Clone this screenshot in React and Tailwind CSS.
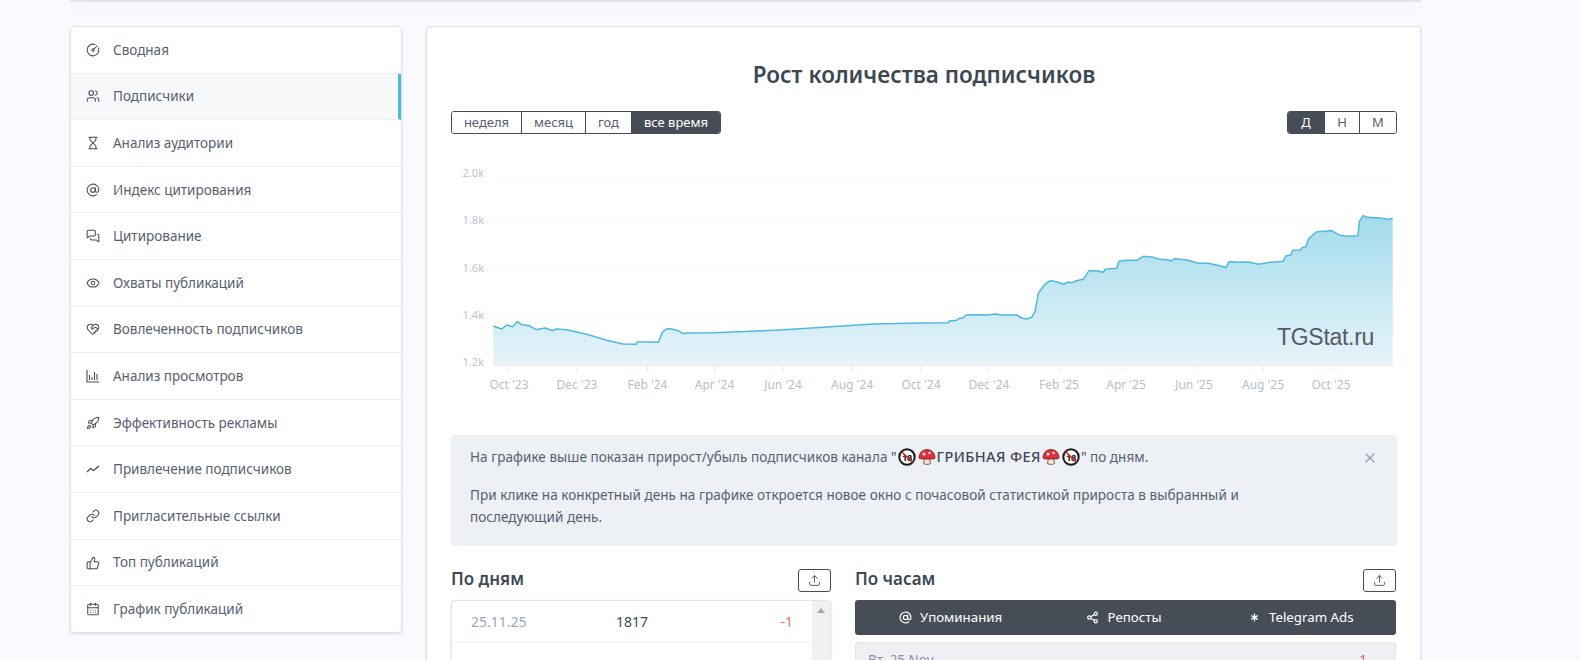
import {
  AtSign,
  CalendarDays,
  CircleGauge,
  Eye,
  HeartHandshake,
  Hourglass,
  Link,
  MessagesSquare,
  Rocket,
  Share2,
  ThumbsUp,
  Upload,
  Users,
  X,
  Asterisk,
} from "lucide-react"

function BarsIcon({ className }) {
  return (
    <svg width="14" height="14" viewBox="0 0 14 14" fill="none" stroke="currentColor" strokeWidth="1.1" className={className}>
      <path d="M1 1v12h12" />
      <path d="M3.500 11V6M6 11V8M8.500 11V3M11 11V5" />
    </svg>
  )
}

function WaveIcon({ className }) {
  return (
    <svg width="14" height="14" viewBox="0 0 14 14" fill="none" stroke="currentColor" strokeWidth="1.3" strokeLinejoin="round" className={className}>
      <path d="M1 10l3.500-3.500L7.500 8.500 13 4" />
    </svg>
  )
}

const menu = [
  { label: "Сводная", icon: CircleGauge },
  { label: "Подписчики", icon: Users, active: true },
  { label: "Анализ аудитории", icon: Hourglass },
  { label: "Индекс цитирования", icon: AtSign },
  { label: "Цитирование", icon: MessagesSquare },
  { label: "Охваты публикаций", icon: Eye },
  { label: "Вовлеченность подписчиков", icon: HeartHandshake },
  { label: "Анализ просмотров", icon: BarsIcon },
  { label: "Эффективность рекламы", icon: Rocket },
  { label: "Привлечение подписчиков", icon: WaveIcon },
  { label: "Пригласительные ссылки", icon: Link },
  { label: "Топ публикаций", icon: ThumbsUp },
  { label: "График публикаций", icon: CalendarDays },
]

// traced from the chart, in page pixels
const line = [
  [493.3, 326], [496.7, 327.3], [501.7, 329], [506.7, 325], [512.7, 326.7], [517.3, 321.7], [521.7, 324.7], [529.3, 325.7],
  [536, 329.7], [545, 328], [552.7, 330.7], [556, 329], [566.7, 329.7], [586.7, 334.3], [606.7, 340.3], [623.3, 344],
  [636, 344.3], [637.3, 342], [646.7, 342], [658.3, 342.3], [662.7, 331.7], [667.3, 328.7], [671.7, 329], [678.3, 330.7],
  [682.7, 333.7], [686.7, 333], [713.3, 332.7], [780, 330], [823.3, 327.3], [873.3, 324], [920, 323],
  [948.3, 322.7], [949.3, 321], [956.7, 320.3], [958.3, 318.7], [963.3, 317.7], [966, 315], [976.7, 314.7], [988.3, 315],
  [995, 314], [1001.7, 315], [1016.7, 315], [1021.7, 318], [1026.7, 319], [1031.7, 317.3], [1035, 311.7], [1038.3, 293.3],
  [1045, 284.3], [1050, 280.7], [1056.7, 281.7], [1063.3, 284.3], [1068.3, 282], [1071.7, 282.7], [1076.7, 280.7], [1083.3, 279.3],
  [1089, 270.7], [1096.7, 270.7], [1103.3, 272.3], [1105, 269.3], [1116.7, 268.3], [1119, 261.3], [1126.7, 260.3], [1136.7, 260.3],
  [1143.3, 256.3], [1153.3, 257.3], [1158.3, 259], [1168.3, 260], [1170.7, 261], [1175, 258.7], [1186.7, 260], [1198.3, 263.3],
  [1208.3, 263.3], [1220, 265.7], [1226, 267.7], [1229, 261.7], [1240, 262.3], [1248.3, 262], [1258.3, 264.3], [1270, 262.3],
  [1283.3, 261.3], [1285.7, 256], [1290.7, 255], [1292.7, 250.3], [1300, 250], [1302.7, 247.3], [1306, 246.7], [1308.3, 239],
  [1316.7, 231.7], [1331.7, 230.7], [1340, 235.3], [1346.7, 236.3], [1358, 235.7], [1359.3, 221.7], [1363.3, 215.3], [1366.7, 217.3],
  [1380, 218], [1388.3, 219.3], [1392.7, 218.7],
]
const linePath = line.map(([x, y]) => `${x},${y}`).join(" ")

const yLabels = [["2.0k", 176, 173], ["1.8k", 223, 220], ["1.6k", 270, 268], ["1.4k", 317, 315], ["1.2k", null, 362]]
const xLabels = [
  ["Oct '23", 509], ["Dec '23", 577], ["Feb '24", 647.5], ["Apr '24", 714.5], ["Jun '24", 783], ["Aug '24", 852], ["Oct '24", 921],
  ["Dec '24", 989], ["Feb '25", 1059], ["Apr '25", 1126], ["Jun '25", 1194], ["Aug '25", 1263], ["Oct '25", 1331],
]

function GrowthChart() {
  return (
    <svg width="946" height="301" viewBox="451 134 946 301" className="block">
      <defs>
        <linearGradient id="area" x1="0" y1="0" x2="0" y2="1">
          <stop offset="0" stopColor="#a3dbeb" />
          <stop offset="1" stopColor="#e6f4fa" />
        </linearGradient>
      </defs>
      {yLabels.map(([label, gridY, textY]) => (
        <g key={label}>
          {gridY && <line x1="493" x2="1393" y1={gridY} y2={gridY} stroke="#f7f8fa" />}
          <text x="484" y={textY + 4} textAnchor="end" fontSize="11" fill="#b9c3d1">{label}</text>
        </g>
      ))}
      <polygon points={`493.3,364 ${linePath} 1392.7,364`} fill="url(#area)" />
      <polyline points={linePath} fill="none" stroke="#4fb9dc" strokeWidth="1.5" strokeLinejoin="round" />
      <line x1="493" x2="1393" y1="365" y2="365" stroke="#e6e8ec" strokeWidth="1.5" />
      {xLabels.map(([label, x]) => (
        <g key={label}>
          <line x1={x} x2={x} y1="365" y2="371" stroke="#e6e8ec" />
          <text x={x} y="389" textAnchor="middle" fontSize="12" fill="#b5bfcd">{label}</text>
        </g>
      ))}
      <text x="1277" y="345" fontSize="23" letterSpacing="-0.3" fill="#555b61" style={{ fontFamily: "Liberation Sans, sans-serif" }}>TGStat.ru</text>
    </svg>
  )
}

function NoUnder18() {
  return (
    <svg width="18" height="18" viewBox="0 0 18 18" className="mx-[1px] inline-block align-[-4px]">
      <circle cx="9" cy="9" r="7.700" fill="#fff" stroke="#1b1b1b" strokeWidth="2" />
      <text x="9" y="12.500" textAnchor="middle" fontSize="9.500" fontWeight="700" letterSpacing="-0.5" fill="#1b1b1b">18</text>
      <path d="M3.500 3.500l11 11" stroke="#d8232a" strokeWidth="1.500" />
    </svg>
  )
}

function Mushroom() {
  return (
    <svg width="18" height="18" viewBox="0 0 18 18" className="mx-[1px] inline-block align-[-4px]">
      <path d="M6.500 10h5l1 5.500c-1.500 1.200-5.500 1.200-7 0z" fill="#f6e6d2" stroke="#5b4632" strokeWidth=".8" />
      <path d="M1 10C1 5 4.500 1.500 9 1.500s8 3.500 8 8.500c0 1-3 1-8 1s-8 0-8-1z" fill="#d9343a" stroke="#6e1a1e" strokeWidth=".8" />
      <circle cx="6" cy="6" r="1.500" fill="#fbe7e2" />
      <circle cx="11.500" cy="5" r="1.200" fill="#fbe7e2" />
    </svg>
  )
}

function ButtonGroup({ items, active, itemClass }) {
  return (
    <div className="flex h-[23px] overflow-hidden rounded-[3px] border border-[#474d57] text-[13px] leading-[21px] text-[#566170]">
      {items.map((item, i) => (
        <span
          key={item}
          className={`${itemClass[i]} text-center ${i > 0 ? "border-l border-[#474d57]" : ""} ${item === active ? "bg-[#474d57] text-white" : "bg-white"}`}
        >
          {item}
        </span>
      ))}
    </div>
  )
}

function ExportButton() {
  return (
    <span className="flex h-[23px] w-[33px] items-center justify-center rounded-[3px] border border-[#474d57] text-[#474d57]">
      <Upload size={13} strokeWidth={1.6} />
    </span>
  )
}

function App() {
  return (
    <div className="h-[660px] w-[1580px] overflow-hidden bg-[#f9fafd] font-['Noto_Sans',sans-serif] text-[13.5px] text-[#566170]">
      <div className="ml-[70px] h-[2px] w-[1351px] border-b-2 border-[#e1e4ea] bg-white shadow-[0_2px_20px_rgba(80,90,120,0.1)]" />
      <div className="ml-[70px] mt-[24px] flex w-[1351px] items-start gap-[24px]">
        <nav className="flex h-[607px] w-[332px] shrink-0 flex-col divide-y divide-[#eef0f5] overflow-hidden rounded-[4px] border border-[#dfe3ea] bg-white shadow-sm">
          {menu.map(({ label, icon: Icon, active }) => (
            <a
              key={label}
              className={`flex flex-1 items-center gap-[13px] pl-[15px] ${active ? "border-r-[3px] border-r-[#45bcd8] bg-[#f7f8fa]" : ""}`}
            >
              <Icon size={14} strokeWidth={1.8} className="shrink-0 text-[#474d57]" />
              <span>{label}</span>
            </a>
          ))}
        </nav>

        <main className="w-[995px] rounded-[4px] border border-[#dfe3ea] bg-white pl-[24px] pr-[23px] pt-[33px] shadow-sm">
          <h1 className="text-center text-[22.5px] font-semibold leading-[30px] text-[#3e4855]">Рост количества подписчиков</h1>

          <div className="mt-[21px] flex justify-between">
            <ButtonGroup
              items={["неделя", "месяц", "год", "все время"]}
              active="все время"
              itemClass={["w-[69px]", "w-[64px]", "w-[46px]", "w-[89px]"]}
            />
            <ButtonGroup items={["Д", "Н", "М"]} active="Д" itemClass={["w-[36px]", "w-[35px]", "w-[37px]"]} />
          </div>

          <GrowthChart />

          <div className="relative rounded-[4px] bg-[#edf0f5] pb-[18px] pl-[19px] pr-[20px] pt-[10px] leading-[22px] tracking-[0.05px]">
            <p>
              На графике выше показан прирост/убыль подписчиков канала <span className="text-[#3e4855]">"<NoUnder18 /><Mushroom /><span className="text-[14.5px] font-medium tracking-[0.4px]">ГРИБНАЯ ФЕЯ</span><Mushroom /><NoUnder18 />"</span> по дням.
            </p>
            <p className="mt-[16px] w-[800px]">
              При клике на конкретный день на графике откроется новое окно с почасовой статистикой прироста в выбранный и последующий день.
            </p>
            <X size={16} strokeWidth={2} className="absolute right-[19px] top-[15px] text-[#9aa3ae]" />
          </div>

          <div className="mt-[23px] flex gap-[24px]">
            <section className="w-[380px]">
              <div className="flex h-[23px] items-center justify-between">
                <h2 className="pb-[3px] text-[17px] font-semibold text-[#3e4855]">По дням</h2>
                <ExportButton />
              </div>
              <div className="mt-[8px] flex rounded-[3px] border border-[#dfe3ea] bg-white shadow-sm">
                <div className="flex-1 divide-y divide-[#edf0f5] text-[14px]">
                  {[["25.11.25", "1817", "-1"], ["24.11.25", "1818", "-2"]].map(([date, count, diff]) => (
                    <div key={date} className="flex h-[42px] items-center pl-[19px] pr-[19px]">
                      <span className="w-[145px] text-[#9aa8bc]">{date}</span>
                      <span className="flex-1 text-[#3e4855]">{count}</span>
                      <span className="text-[#f8716e]">{diff}</span>
                    </div>
                  ))}
                </div>
                <div className="relative w-[18px] bg-[#f1f1f1]">
                  <span className="absolute left-[5px] top-[7px] h-0 w-0 border-x-[4px] border-b-[5px] border-x-transparent border-b-[#a8a8a8]" />
                </div>
              </div>
            </section>

            <section className="w-[541px]">
              <div className="flex h-[23px] items-center justify-between">
                <h2 className="pb-[3px] text-[17px] font-semibold text-[#3e4855]">По часам</h2>
                <ExportButton />
              </div>
              <div className="mt-[8px] grid h-[35px] grid-cols-3 rounded-[3px] bg-[#474d57] text-[13.3px] text-white">
                <span className="flex items-center justify-center gap-[8px] pl-[11px]"><AtSign size={13} strokeWidth={2.2} />Упоминания</span>
                <span className="flex items-center justify-center gap-[8px] pr-[3px]"><Share2 size={13} strokeWidth={2.2} />Репосты</span>
                <span className="flex items-center justify-center gap-[8px] pr-[10px]"><Asterisk size={13} strokeWidth={2.4} />Telegram Ads</span>
              </div>
              <div className="mt-[7px] flex h-[60px] justify-between rounded-[3px] border border-[#e3e6ec] bg-[#eef0f4] px-[12px] pt-[7px]">
                <span className="text-[#8a94a3]">Вт, 25 Nov</span>
                <span className="mr-[16px] text-[#f2557a]">-1</span>
              </div>
            </section>
          </div>
        </main>
      </div>
    </div>
  )
}

export default App
